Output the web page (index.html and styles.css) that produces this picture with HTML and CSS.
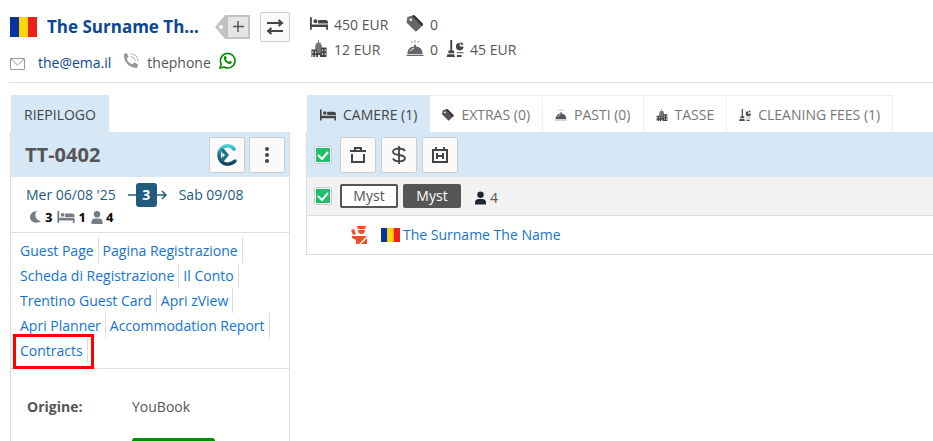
FILE: index.html
```html
<!DOCTYPE html>
<html lang="it">
<head>
    <meta charset="UTF-8">
    <meta name="viewport" content="width=device-width, initial-scale=1.0">
    <title>TT-0402</title>
    <link rel="stylesheet" href="styles.css">
</head>
<body>
    <svg class="sprite" aria-hidden="true">
        <symbol id="flag-ro" viewBox="0 0 27 20" preserveAspectRatio="none">
            <path fill="#0a32a0" d="M0 0h9v20H0z"/>
            <path fill="#ffd500" d="M9 0h9v20H9z"/>
            <path fill="#e8231a" d="M18 0h9v20h-9z"/>
        </symbol>
        <symbol id="bed" viewBox="0 0 20 14">
            <path d="M0 0h2v8h18v6h-2v-3H2v3H0z"/>
            <circle cx="6" cy="4.500" r="2.200"/>
            <path d="M9 3h8a3 3 0 0 1 3 3v1H9z"/>
        </symbol>
        <symbol id="tag" viewBox="0 0 18 18">
            <path d="M1 2l7-2 9 9a1.500 1.500 0 0 1 0 2l-6 6a1.500 1.500 0 0 1-2 0L0 8z"/>
            <path d="M8 0l9.500 9.500-1 2.500L6 1z" fill="#333"/>
            <circle cx="4.500" cy="5" r="1.400" fill="#fff"/>
        </symbol>
        <symbol id="city" viewBox="0 0 18 18">
            <path fill="#777" d="M8 0h1v3h2v2h1v13H5V5h1V3h2z"/>
            <path fill="#444" d="M1 10h6v8H1zM11 8h6v10h-6zM7 14h4v4H7z"/>
            <path fill="#fff" d="M2 12h1v2H2zM5 12h1v2H5zM12 10h1v2h-1zM15 10h1v2h-1zM12 14h1v2h-1zM15 14h1v2h-1zM2 16h1v2H2zM5 16h1v2H5zM8 16h2v2H8z"/>
        </symbol>
        <symbol id="bell" viewBox="0 0 18 18">
            <path d="M0 16h18v1H0zM1 15c0-5 3-8 7-8V5h2v2c4 0 7 3 7 8z"/>
            <path d="M9 0v3M5 1l1 2M13 1l-1 2" stroke="#999" fill="none"/>
            <path d="M4 12c1-2 2-3 4-3" stroke="#fff" fill="none"/>
        </symbol>
        <symbol id="cleaning" viewBox="0 0 18 18">
            <path d="M4 0h2v11h2v3H2v-3h2zM1 15h7l1 3H0zM14 3v4h4a4 4 0 1 1-4-4zM15 2a4 4 0 0 1 3 3h-3zM11 13h7v1h-7zM11 16h5v2h-5z"/>
        </symbol>
        <symbol id="person" viewBox="0 0 12 14">
            <circle cx="6" cy="3.500" r="3.500"/>
            <path d="M0 14v-2c0-3 2-4 4-4h4c2 0 4 1 4 4v2z"/>
        </symbol>
    </svg>

    <header class="guest-header">
        <div class="guest">
            <div class="guest-title">
                <svg class="flag-large"><use href="#flag-ro"/></svg>
                <h1 class="guest-name">The Surname The Name</h1>
                <button type="button" class="tag-button" aria-label="Aggiungi tag">
                    <svg width="36" height="24" viewBox="0 0 36 24">
                        <path fill="#c2c2c2" d="M10 0h25v24H10L0 12z"/>
                        <path fill="#e6e6e6" d="M13 2h20v20H13z"/>
                        <circle cx="6" cy="12" r="2" fill="#fff"/>
                        <path d="M23 6v11M18 11.500h11" stroke="#555" stroke-width="1.500"/>
                    </svg>
                </button>
                <button type="button" class="swap-button" aria-label="Scambia">
                    <svg width="18" height="16" viewBox="0 0 18 16" fill="none" stroke="#444" stroke-width="2">
                        <path d="M1 4h15M12.500 1L16 4l-3.500 3M17 12H2M5.500 9L2 12l3.500 3"/>
                    </svg>
                </button>
            </div>
            <div class="contacts">
                <svg class="icon-mail" width="15" height="12" viewBox="0 0 15 12" fill="none" stroke="#999">
                    <path d="M.5.5h14v11H.5zM1 1l6.500 6L14 1"/>
                </svg>
                <a class="email" href="mailto:the@ema.il">the@ema.il</a>
                <svg class="icon-phone" width="16" height="16" viewBox="0 0 17 17">
                    <path fill="#999" d="M1 1l3-1 2 4-2 2c1 3 3 5 6 6l2-2 4 2-1 4C7 16 0 9 1 1z"/>
                    <path fill="none" stroke="#aaa" d="M8 1c5 0 8 3 8 8M8 4c3 0 5 2 5 5"/>
                </svg>
                <span class="phone">thephone</span>
                <svg class="icon-whatsapp" width="17" height="17" viewBox="0 0 17 17">
                    <path fill="none" stroke="#008a00" stroke-width="1.600" d="M1 16l1.200-4A7.300 7.300 0 1 1 5 15z"/>
                    <path fill="#008a00" d="M5 5c1-1.500 2-1 2.500.8L7 7.200c.6 1.300 1.500 2.100 2.800 2.700l1.200-.9c1.900.6 2.200 1 1.500 2C10 14 4 9 5 5z"/>
                </svg>
            </div>
        </div>
        <div class="totals">
            <svg class="icon-total dark"><use href="#bed"/></svg>
            <span>450 EUR</span>
            <svg class="icon-total"><use href="#tag"/></svg>
            <span>0</span>
            <svg class="icon-total second-row"><use href="#city"/></svg>
            <span>12 EUR</span>
            <svg class="icon-total"><use href="#bell"/></svg>
            <span>0</span>
            <svg class="icon-total dark"><use href="#cleaning"/></svg>
            <span>45 EUR</span>
        </div>
    </header>

    <main class="columns">
        <section class="summary">
            <nav class="tabs">
                <button type="button" class="tab active">RIEPILOGO</button>
            </nav>
            <div class="panel">
                <div class="panel-header">
                    <h2 class="code">TT-0402</h2>
                    <button type="button" class="tool" aria-label="Check-in">
                        <svg width="20" height="22" viewBox="0 0 20 22" fill="none">
                            <defs>
                                <linearGradient id="swirl" x1="0" y1="0" x2="0" y2="1">
                                    <stop offset="0" stop-color="#42d3d5"/>
                                    <stop offset=".5" stop-color="#1c7189"/>
                                    <stop offset="1" stop-color="#17405f"/>
                                </linearGradient>
                            </defs>
                            <path stroke="url(#swirl)" stroke-width="3.500" stroke-linecap="round" d="M17 5C14 1 8 1 5 4c-4 4-4 10 0 14 3 3 9 3 13-1"/>
                            <path fill="#1c7189" d="M4 5h3l5 6-5 6H4l2-6z"/>
                            <path fill="#fff" d="M6 9l2 2-2 2z"/>
                        </svg>
                    </button>
                    <button type="button" class="tool" aria-label="Altro">
                        <svg width="4" height="16" viewBox="0 0 4 16" fill="#444">
                            <circle cx="2" cy="2" r="2"/><circle cx="2" cy="8" r="2"/><circle cx="2" cy="14" r="2"/>
                        </svg>
                    </button>
                </div>
                <div class="stay">
                    <div class="dates">
                        <span>Mer 06/08 '25</span>
                        <span class="nights">
                            <svg width="8" height="10" viewBox="0 0 8 10"><path stroke="#235b7c" stroke-width="1.500" d="M0 5h8"/></svg>
                            <b class="nights-count">3</b>
                            <svg width="10" height="10" viewBox="0 0 10 10" fill="none" stroke="#235b7c" stroke-width="1.500"><path d="M0 5h9M5 1l4 4-4 4"/></svg>
                        </span>
                        <span>Sab 09/08</span>
                    </div>
                    <div class="counts">
                        <svg width="12" height="12" viewBox="0 0 12 12"><path d="M7 0C4 3 5 9 11 10 7 13 0 12 0 6c0-3 3-6 7-6z"/></svg>
                        <b>3</b>
                        <svg width="18" height="12"><use href="#bed"/></svg>
                        <b>1</b>
                        <svg width="12" height="13"><use href="#person"/></svg>
                        <b>4</b>
                    </div>
                </div>
                <nav class="links">
                    <a href="#">Guest Page</a>
                    <a href="#">Pagina Registrazione</a>
                    <a href="#">Scheda di Registrazione</a>
                    <a href="#">Il Conto</a>
                    <a href="#">Trentino Guest Card</a>
                    <a href="#">Apri zView</a>
                    <a href="#">Apri Planner</a>
                    <a href="#">Accommodation Report</a>
                    <a href="#" class="highlighted">Contracts</a>
                </nav>
                <dl class="details">
                    <dt>Origine:</dt>
                    <dd>YouBook</dd>
                    <dt></dt>
                    <dd><span class="status"></span></dd>
                </dl>
            </div>
        </section>

        <section class="rooms">
            <nav class="tabs">
                <button type="button" class="tab active"><svg class="icon-tab"><use href="#bed"/></svg>CAMERE (1)</button>
                <button type="button" class="tab"><svg class="icon-tab"><use href="#tag"/></svg>EXTRAS (0)</button>
                <button type="button" class="tab"><svg class="icon-tab"><use href="#bell"/></svg>PASTI (0)</button>
                <button type="button" class="tab"><svg class="icon-tab"><use href="#city"/></svg>TASSE</button>
                <button type="button" class="tab"><svg class="icon-tab"><use href="#cleaning"/></svg>CLEANING FEES (1)</button>
            </nav>
            <div class="panel">
                <div class="toolbar">
                    <input type="checkbox" class="check" aria-label="Seleziona tutto" checked>
                    <button type="button" class="tool" aria-label="Elimina">
                        <svg width="16" height="16" viewBox="0 0 16 16" fill="none" stroke="#444" stroke-width="2">
                            <path d="M0 4h16M5 4V1h6v3M2 7v8h12V7"/>
                        </svg>
                    </button>
                    <button type="button" class="tool" aria-label="Prezzo">
                        <svg width="14" height="18" viewBox="0 0 14 18" fill="none" stroke="#444" stroke-width="1.800">
                            <path d="M7 0v18M13 5c-1-2-3-2.500-6-2.500S1 3.500 1 5.700 3 8.500 7 9s6 1.300 6 3.300-3 3-6 3-5-.8-6-2.800"/>
                        </svg>
                    </button>
                    <button type="button" class="tool" aria-label="Calendario">
                        <svg width="16" height="16" viewBox="0 0 16 16" fill="none" stroke="#444" stroke-width="2">
                            <path d="M1 3h14v12H1zM4 0v3M12 0v3M5 6v6M11 6v6M5 9h6"/>
                        </svg>
                    </button>
                </div>
                <div class="room">
                    <input type="checkbox" class="check" aria-label="Seleziona camera" checked>
                    <button type="button" class="room-name">Myst</button>
                    <button type="button" class="room-name filled">Myst</button>
                    <span class="occupancy">
                        <svg width="11" height="14"><use href="#person"/></svg>4
                    </span>
                </div>
                <div class="room-guest">
                    <svg class="icon-alert" width="17" height="18" viewBox="0 0 17 18" fill="#f05023">
                        <path d="M6 0h9l-1 3H7zM7 4h7c0 2-1 4-3.500 4S7 6 7 4zM0 4l3-1 2 5-3 1zM1 10h14v1l-7 7H5v-4L1 12zM16 12v6h-6z"/>
                    </svg>
                    <svg class="flag-small"><use href="#flag-ro"/></svg>
                    <a href="#">The Surname The Name</a>
                </div>
            </div>
        </section>
    </main>
</body>
</html>
```
FILE: styles.css
```css
* {
    box-sizing: border-box;
}

body {
    height: 100vh;
    margin: 0;
    overflow: hidden;
    background: #fff;
    color: #555;
    font-family: "Open Sans", "Noto Sans", sans-serif;
    font-size: 14px;
    line-height: 20px;
}

a {
    color: #1573cf;
    text-decoration: none;
}

button {
    padding: 0;
    border: none;
    background: none;
    color: inherit;
    font: inherit;
    cursor: pointer;
}

svg {
    display: block;
    flex: none;
}

.sprite {
    position: absolute;
    width: 0;
    height: 0;
}

/* header */
.guest-header {
    display: flex;
    gap: 20px;
    margin-left: 9px;
    padding: 12px 0 9px;
    border-bottom: 1px solid #ddd;
}

.guest {
    width: 281px;
    padding-left: 1px;
}

.guest-title {
    display: flex;
    align-items: center;
    height: 30px;
}

.flag-large {
    width: 27px;
    height: 20px;
}

.guest-name {
    flex: 1;
    min-width: 0;
    margin: 0 8px 0 10px;
    overflow: hidden;
    color: #0b4696;
    font-size: 17px;
    line-height: 28px;
    text-overflow: ellipsis;
    white-space: nowrap;
}

.swap-button {
    display: flex;
    align-items: center;
    justify-content: center;
    width: 30px;
    height: 30px;
    margin-left: 9px;
    border: 1px solid #ccc;
    border-radius: 2px;
    background: #fafafa;
}

.contacts {
    display: flex;
    align-items: center;
    gap: 8px;
    margin-top: 10px;
}

.icon-mail {
    margin-top: 2px;
}

.icon-phone,
.icon-whatsapp {
    margin-bottom: 4px;
}

.email {
    margin: 0 4px 0 5px;
    color: #0b4696;
}

.totals {
    display: grid;
    grid-template-columns: 24px 72px 24px 16px 24px auto;
    grid-auto-rows: 25px;
    align-items: center;
}

.second-row {
    grid-column: 1;
}

.icon-total {
    width: 18px;
    height: 17px;
    margin-bottom: 3px;
    fill: #666;
}

.dark {
    fill: #444;
}

/* columns */
.columns {
    display: grid;
    grid-template-columns: 280px 1fr;
    gap: 16px;
    padding: 12px 0 0 10px;
}

.tabs {
    display: flex;
    height: 37px;
    padding-left: 1px;
}

.tab {
    display: flex;
    align-items: center;
    gap: 7px;
    padding: 2px 12px 0;
    border-top: 1px solid #eee;
    border-right: 1px solid #eee;
    color: #777;
    white-space: nowrap;
}

.tab.active {
    padding-left: 13px;
    border-color: #d6e7f6;
    background: #d6e7f6;
    color: #444;
}

.icon-tab {
    width: 12px;
    height: 12px;
    fill: #555;
}

.active .icon-tab {
    width: 16px;
    fill: #444;
}

.panel {
    border-left: 1px solid #ddd;
}

.summary .panel {
    border-right: 1px solid #ddd;
}

.panel-header,
.toolbar {
    display: flex;
    align-items: center;
    height: 45px;
    background: #d6e7f6;
}

.panel-header {
    gap: 4px;
    padding: 0 4px 0 14px;
}

.toolbar {
    gap: 5px;
    padding-left: 7px;
}

.code {
    flex: 1;
    margin: 0;
    font-size: 20px;
}

.tool {
    display: flex;
    align-items: center;
    justify-content: center;
    width: 36px;
    height: 36px;
    border: 1px solid #ccc;
    border-radius: 2px;
    background: #fafafa;
}

/* summary */
.stay {
    height: 56px;
    padding: 6px 15px;
    border-bottom: 1px solid #ddd;
}

.dates {
    display: flex;
    align-items: center;
    gap: 12px;
    color: #235b7c;
}

.nights {
    display: flex;
    align-items: center;
}

.nights-count {
    width: 21px;
    border-radius: 3px;
    background: #235b7c;
    color: #fff;
    line-height: 24px;
    text-align: center;
}

.counts {
    display: flex;
    align-items: center;
    gap: 3px;
    padding-left: 4px;
    color: #000;
    font-size: 13px;
    fill: #777d85;
}

.counts b {
    margin-right: 2px;
}

.links {
    display: flex;
    flex-wrap: wrap;
    padding: 5px;
    border-bottom: 1px solid #ddd;
}

.links a {
    position: relative;
    padding: 0 4px;
    border-right: 1px solid #ddd;
    line-height: 25px;
}

.highlighted::after {
    position: absolute;
    inset: -4px -7px -6px -3px;
    border: 3px solid #f00;
    content: "";
}

.details {
    display: grid;
    grid-template-columns: 105px 1fr;
    row-gap: 21px;
    margin: 0;
    padding: 28px 16px;
}

.details dt {
    font-weight: bold;
}

.details dd {
    margin: 0;
}

.status {
    display: block;
    width: 83px;
    height: 24px;
    border-radius: 3px;
    background: #008a00;
}

/* rooms */
.check {
    width: 18px;
    height: 18px;
    margin: 0 3px 0 0;
    border: 1px solid #ccc;
    border-radius: 2px;
    appearance: none;
    background: #fff;
}

.check:checked::before {
    display: block;
    height: 14px;
    margin: 1px;
    background: #1fbf6b url("data:image/svg+xml,%3Csvg xmlns='http://www.w3.org/2000/svg' viewBox='0 0 14 14'%3E%3Cpath d='M2 7l4 4 6-7' fill='none' stroke='white' stroke-width='2'/%3E%3C/svg%3E");
    content: "";
}

.room {
    display: flex;
    align-items: center;
    gap: 5px;
    height: 39px;
    padding-left: 7px;
    border-bottom: 1px solid #ddd;
    background: #f2f2f2;
}

.room-name {
    width: 58px;
    height: 24px;
    border: 2px solid #555;
    border-radius: 2px;
    background: #fff;
}

.room-name.filled {
    background: #555;
    color: #fff;
}

.occupancy {
    display: flex;
    align-items: center;
    gap: 4px;
    margin-left: 9px;
    padding-top: 3px;
    fill: #1d2733;
}

.room-guest {
    display: flex;
    align-items: center;
    height: 39px;
    padding-left: 44px;
    border-bottom: 1px solid #ddd;
}

.flag-small {
    width: 19px;
    height: 14px;
    margin: 0 3px 0 13px;
}
```
